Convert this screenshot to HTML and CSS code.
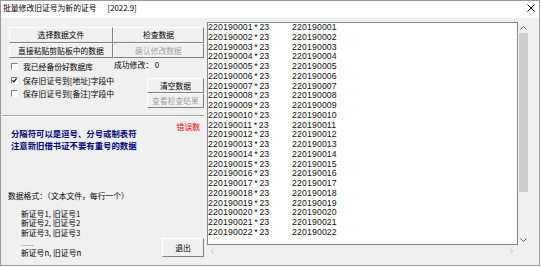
FILE: index.html
```html
<!DOCTYPE html>
<html lang="zh-CN">
<head>
    <meta charset="UTF-8">
    <meta name="viewport" content="width=device-width, initial-scale=1.0">
    <title>批量修改旧证号为新的证号</title>
    <link rel="stylesheet" href="styles.css">
</head>
<body>

<div class="window">
    <!-- Title Bar -->
    <div class="titlebar">
        <span>批量修改旧证号为新的证号</span>
        <span class="version">[2022.9]</span>
        <svg class="close" width="8" height="8" viewBox="0 0 8 8"><path d="M0.5 0.5L7.5 7.5M7.5 0.5L0.5 7.5" stroke="#000" stroke-width="1" fill="none"/></svg>
    </div>

    <div class="main">
        <!-- Controls -->
        <div class="left">
            <div class="btn-grid">
                <button>选择数据文件</button>
                <button>检查数据</button>
                <button>直接粘贴剪贴板中的数据</button>
                <button disabled>确认修改数据</button>
            </div>

            <div class="opts">
                <div class="checks">
                    <label><span class="box"></span>我已经备份好数据库</label>
                    <label><span class="box"><svg width="5" height="5" viewBox="0 0 5 5"><path d="M0.4 2.4L1.8 3.9L4.6 0.6" stroke="#000" stroke-width="1.2" fill="none"/></svg></span>保存旧证号到[地址]字段中</label>
                    <label><span class="box"></span>保存旧证号到[备注]字段中</label>
                </div>
                <div class="side">
                    <div class="count">成功修改：&nbsp;0</div>
                    <button class="small first">清空数据</button>
                    <button class="small" disabled>查看检查结果</button>
                </div>
            </div>

            <div class="sep"></div>

            <div class="notes">
                <div class="tips">
                    <div>分隔符可以是逗号、分号或制表符</div>
                    <div>注意新旧借书证不要有重号的数据</div>
                </div>
                <div class="err">错误数</div>
            </div>

            <div class="format">数据格式：（文本文件，每行一个）</div>

            <div class="bottom">
                <div class="sample">
                    <div>新证号1, 旧证号1</div>
                    <div>新证号2, 旧证号2</div>
                    <div>新证号3, 旧证号3</div>
                    <div class="dots">......</div>
                    <div>新证号n, 旧证号n</div>
                </div>
                <button class="exit">退出</button>
            </div>
        </div>

        <!-- Data Memo -->
        <div class="right">
            <div class="memo">
                <div class="row"><span class="id">220190001<b>*</b>23</span><span>220190001</span></div>
                <div class="row"><span class="id">220190002<b>*</b>23</span><span>220190002</span></div>
                <div class="row"><span class="id">220190003<b>*</b>23</span><span>220190003</span></div>
                <div class="row"><span class="id">220190004<b>*</b>23</span><span>220190004</span></div>
                <div class="row"><span class="id">220190005<b>*</b>23</span><span>220190005</span></div>
                <div class="row"><span class="id">220190006<b>*</b>23</span><span>220190006</span></div>
                <div class="row"><span class="id">220190007<b>*</b>23</span><span>220190007</span></div>
                <div class="row"><span class="id">220190008<b>*</b>23</span><span>220190008</span></div>
                <div class="row"><span class="id">220190009<b>*</b>23</span><span>220190009</span></div>
                <div class="row"><span class="id">220190010<b>*</b>23</span><span>220190010</span></div>
                <div class="row"><span class="id">220190011<b>*</b>23</span><span>220190011</span></div>
                <div class="row"><span class="id">220190012<b>*</b>23</span><span>220190012</span></div>
                <div class="row"><span class="id">220190013<b>*</b>23</span><span>220190013</span></div>
                <div class="row"><span class="id">220190014<b>*</b>23</span><span>220190014</span></div>
                <div class="row"><span class="id">220190015<b>*</b>23</span><span>220190015</span></div>
                <div class="row"><span class="id">220190016<b>*</b>23</span><span>220190016</span></div>
                <div class="row"><span class="id">220190017<b>*</b>23</span><span>220190017</span></div>
                <div class="row"><span class="id">220190018<b>*</b>23</span><span>220190018</span></div>
                <div class="row"><span class="id">220190019<b>*</b>23</span><span>220190019</span></div>
                <div class="row"><span class="id">220190020<b>*</b>23</span><span>220190020</span></div>
                <div class="row"><span class="id">220190021<b>*</b>23</span><span>220190021</span></div>
                <div class="row"><span class="id">220190022<b>*</b>23</span><span>220190022</span></div>
            </div>
            <div class="vscroll">
                <div class="arrow"><svg width="7" height="4" viewBox="0 0 7 4"><path d="M0.5 3.5L3.5 0.5L6.5 3.5" stroke="#606060" fill="none"/></svg></div>
                <div class="thumb"></div>
                <div class="track"></div>
                <div class="arrow"><svg width="7" height="4" viewBox="0 0 7 4"><path d="M0.5 0.5L3.5 3.5L6.5 0.5" stroke="#606060" fill="none"/></svg></div>
            </div>
            <div class="hscroll">
                <svg width="3" height="6" viewBox="0 0 3 6"><path d="M2.5 0.5L0.5 3L2.5 5.5" stroke="#c0c0c0" fill="none"/></svg>
                <svg width="3" height="6" viewBox="0 0 3 6"><path d="M0.5 0.5L2.5 3L0.5 5.5" stroke="#c0c0c0" fill="none"/></svg>
            </div>
        </div>
    </div>
</div>

</body>
</html>
```

FILE: styles.css
```css
* {
    box-sizing: border-box;
}
html, body {
    margin: 0;
    padding: 0;
    background: #fff;
}
body {
    font-family: "Noto Sans CJK SC", sans-serif;
    font-size: 7.8px;
    color: #000;
}
.window {
    width: 540px;
    height: 266px;
    border: 1px solid #9a9a9a;
    background: #f0f0f0;
    display: flex;
    flex-direction: column;
}
.titlebar {
    height: 17px;
    flex: none;
    background: #fff;
    display: flex;
    align-items: flex-start;
    line-height: 13px;
    padding-left: 2px;
}
.version {
    margin-left: 11px;
}
.close {
    margin-left: auto;
    margin-right: 4px;
    margin-top: 3px;
}
.main {
    flex: 1;
    display: flex;
}
.left {
    width: 204px;
    flex: none;
    padding: 9px 1px 0 1px;
}
button {
    font: inherit;
    color: #000;
    margin: 0;
    padding: 0;
    background: #f0f0f0;
    border: 1px solid;
    border-color: #fff #7f7f7f #7f7f7f #fff;
    line-height: 1;
    white-space: nowrap;
}
button:disabled {
    color: #a0a0a0;
    text-shadow: 1px 1px 0 #fff;
}
.btn-grid {
    display: grid;
    grid-template-columns: 104px 1fr;
    grid-template-rows: 16px 15px;
    margin-left: 7px;
}
.opts {
    display: flex;
    margin-top: 2px;
}
.checks {
    width: 103px;
    flex: none;
    margin-left: 9px;
}
.checks label {
    display: flex;
    align-items: center;
    height: 13.5px;
    white-space: nowrap;
}
.box {
    width: 7px;
    height: 7px;
    flex: none;
    margin-right: 5px;
    border: 1px solid;
    border-color: #808080 #fff #fff #808080;
    background: #fff;
    display: flex;
}
.side {
    flex: 1;
    display: flex;
    flex-direction: column;
    align-items: flex-end;
}
.count {
    align-self: flex-start;
    line-height: 10px;
    white-space: nowrap;
}
.small {
    width: 57px;
    height: 15px;
}
.small.first {
    margin-top: 8px;
}
.sep {
    height: 2px;
    margin-top: 7px;
    border-top: 1px solid #a0a0a0;
    border-bottom: 1px solid #fff;
}
.notes {
    display: flex;
    justify-content: space-between;
    margin-top: 5px;
}
.tips {
    margin-left: 9px;
    padding-top: 5px;
    color: #000080;
    font-weight: bold;
    font-size: 8.4px;
    line-height: 12px;
    white-space: nowrap;
}
.err {
    color: #f00;
    line-height: 10px;
    margin-right: 4px;
}
.format {
    margin-top: 39px;
    margin-left: 6px;
    line-height: 12px;
}
.bottom {
    display: flex;
    justify-content: space-between;
    align-items: flex-end;
    margin-top: 6.5px;
}
.sample {
    margin-left: 19px;
    line-height: 9.9px;
    white-space: nowrap;
}
.dots {
    color: #808080;
}
.exit {
    width: 42px;
    height: 19px;
    margin-bottom: 1px;
}
.right {
    display: grid;
    grid-template-columns: 311px 11px;
    grid-template-rows: 223px 12px;
    margin-top: 4px;
    margin-left: 2px;
}
.memo {
    background: #fff;
    border: 1px solid #828790;
    overflow: hidden;
    font-family: "Liberation Sans", Arial, sans-serif;
    font-size: 8.7px;
    letter-spacing: 0.15px;
    line-height: 9.76px;
    color: #111;
}
.row {
    display: flex;
    height: 9.76px;
    white-space: nowrap;
}
.row .id {
    width: 84px;
    flex: none;
}
.row b {
    font-weight: normal;
    padding: 0 1.5px;
}
.vscroll {
    display: flex;
    flex-direction: column;
    align-items: center;
}
.arrow {
    height: 11px;
    display: flex;
    align-items: center;
    justify-content: center;
}
.thumb {
    width: 9px;
    height: 159px;
    background: #cdcdcd;
}
.track {
    flex: 1;
}
.hscroll {
    display: flex;
    justify-content: space-between;
    align-items: center;
    padding: 0 5px 0 4px;
}
```
